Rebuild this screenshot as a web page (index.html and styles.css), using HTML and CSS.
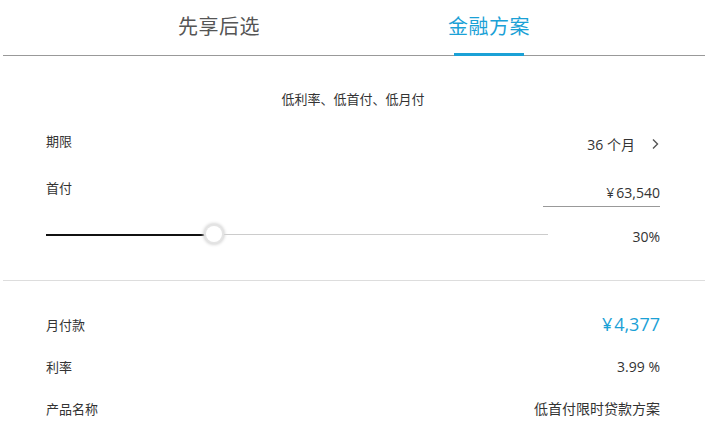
FILE: index.html
```html
<!DOCTYPE html>
<html lang="zh-CN">
<head>
<meta charset="utf-8">
<title>金融方案</title>
<link rel="stylesheet" href="styles.css">
</head>
<body>
<div class="page">
  <nav class="tabs">
    <div class="tab">先享后选</div>
    <div class="tab active">金融方案</div>
  </nav>
  <section class="plan">
    <p class="subtitle">低利率、低首付、低月付</p>
    <div class="row row-term">
      <span class="label">期限</span>
      <span class="value term">36 个月
        <svg class="chev" width="8" height="12" viewBox="0 0 8 12"><polyline points="2,1.5 6.5,6 2,10.5" fill="none" stroke="#555" stroke-width="1.4"/></svg>
      </span>
    </div>
    <div class="row row-down">
      <span class="label">首付</span>
      <span class="value input"><span class="yen">¥</span>63,540</span>
    </div>
    <div class="row row-slider">
      <div class="slider">
        <div class="fill" style="width:32%"></div>
        <div class="thumb"></div>
        <div class="track"></div>
      </div>
      <span class="value pct">30%</span>
    </div>
  </section>
  <hr class="divider">
  <section class="result">
    <div class="row rrow first">
      <span class="label">月付款</span>
      <span class="value big"><span class="yen">¥</span>4,377</span>
    </div>
    <div class="row rrow">
      <span class="label">利率</span>
      <span class="value">3.99 %</span>
    </div>
    <div class="row rrow">
      <span class="label">产品名称</span>
      <span class="value">低首付限时贷款方案</span>
    </div>
  </section>
</div>
</body>
</html>
```
FILE: styles.css
```css
html, body {
  margin: 0;
  padding: 0;
  background: #fff;
}
body {
  font-family: "Open Sans", "Noto Sans CJK SC", sans-serif;
  color: #333;
  font-size: 13px;
  overflow: hidden;
}
.page {
  margin: 0 4px 0 3px;
}
.tabs {
  display: flex;
  justify-content: center;
  height: 55px;
  border-bottom: 1px solid #999;
}
.tab {
  position: relative;
  width: 270px;
  text-align: center;
  line-height: 54px;
  font-size: 20px;
  letter-spacing: 0.5px;
  color: #555;
}
.tab.active {
  color: #1ba1d6;
}
.tab.active::after {
  content: "";
  position: absolute;
  left: 100px;
  right: 100px;
  bottom: -1px;
  height: 3px;
  background: #1ba1d6;
}
.plan {
  padding: 0 45px 0 43px;
}
.subtitle {
  margin: 33px 0 0;
  text-align: center;
  font-size: 13px;
  line-height: 20px;
  color: #333;
}
.row {
  display: flex;
  align-items: center;
  justify-content: space-between;
}
.label {
  font-size: 13px;
}
.plan .label {
  margin-bottom: 5px;
}
.value {
  font-size: 14px;
}
.yen {
  margin-right: 2px;
}
.row-term {
  height: 44px;
  margin-top: 12px;
}
.term {
  display: flex;
  align-items: center;
  padding-top: 2px;
}
.chev {
  margin-left: 16px;
  margin-right: 1px;
}
.row-down {
  height: 44px;
  align-items: flex-start;
  padding-top: 14px;
  box-sizing: border-box;
}
.plan .row-down .label {
  margin-top: -1px;
}
.input {
  width: 117px;
  text-align: right;
  margin-top: 4px;
  padding-bottom: 4px;
  border-bottom: 1px solid #999;
}
.row-slider {
  height: 52px;
}
.row-slider .pct {
  padding-top: 2px;
}
.slider {
  position: relative;
  width: 502px;
  height: 20px;
}
.track {
  position: absolute;
  left: 0;
  right: 0;
  top: 9px;
  height: 1px;
  background: #ccc;
}
.fill {
  position: absolute;
  left: 0;
  top: 9px;
  height: 2px;
  background: #111;
  z-index: 1;
}
.thumb {
  position: absolute;
  left: 160px;
  top: 1px;
  width: 16px;
  height: 16px;
  border-radius: 50%;
  background: #fff;
  box-shadow: 0 0 0 2px #e4e4e4, 0 0 3px 3px #d8d8d8;
  z-index: 2;
}
.divider {
  margin: 19px 0 0;
  border: 0;
  border-top: 1px solid #ddd;
}
.result {
  padding: 0 45px 0 43px;
}
.rrow {
  height: 42px;
}
.rrow.first {
  margin-top: 22px;
}
.big {
  font-size: 18px;
  color: #1ba1d6;
}
```
